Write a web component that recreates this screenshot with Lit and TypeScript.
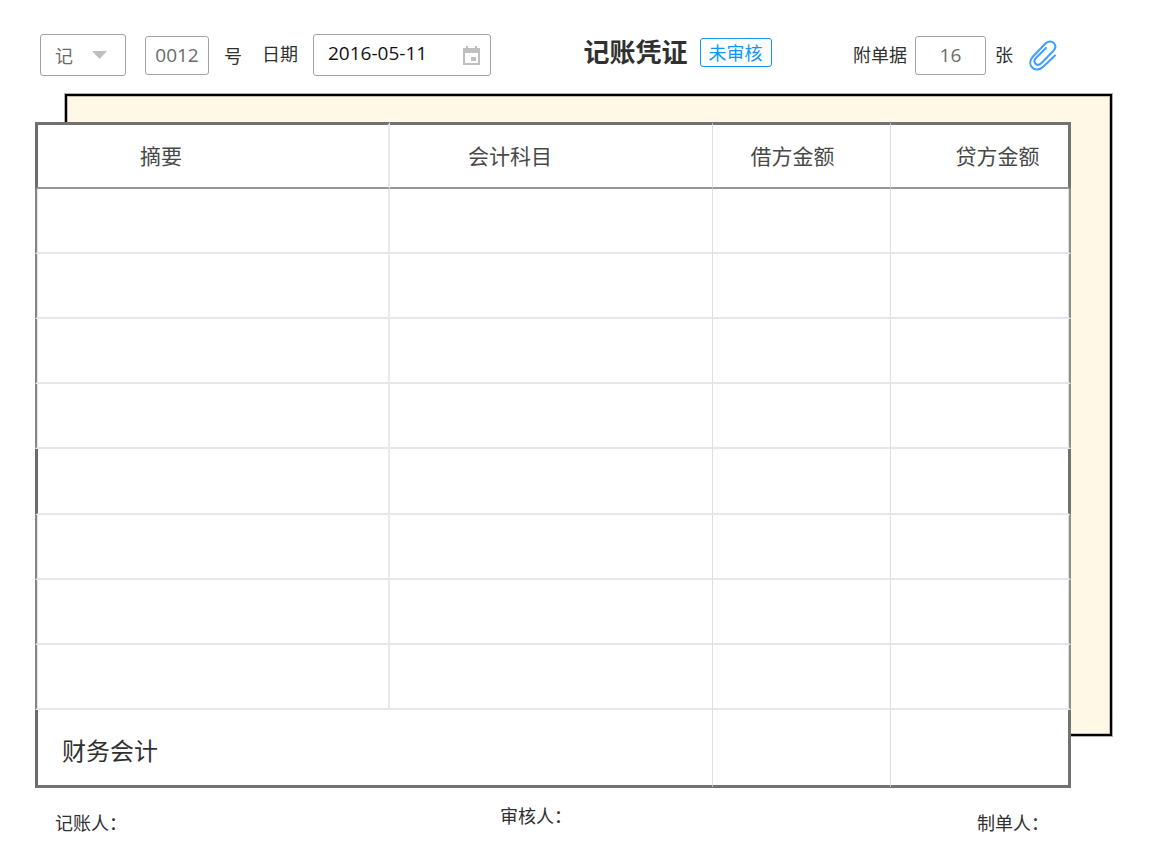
import { LitElement, html, css } from "lit";
import { customElement, state } from "lit/decorators.js";

const HEADINGS = ["摘要", "会计科目", "借方金额", "贷方金额"];
const ROW_COUNT = 8;
const ACTIVE_ROW = 4;

@customElement("app-root")
export class AppRoot extends LitElement {
  static styles = css`
    :host {
      display: block;
      background: #fff;
      color: #303030;
      font-family: "Open Sans", "Noto Sans CJK SC", sans-serif;
      font-size: 18px;
      line-height: 24px;
    }
    * {
      box-sizing: border-box;
    }
    .bar {
      display: flex;
      justify-content: space-between;
      align-items: center;
      padding: 34px 102px 0 40px;
      height: 76px;
    }
    .group {
      display: flex;
      align-items: center;
      white-space: nowrap;
    }
    .field {
      display: block;
      font: inherit;
      color: #6a6a6a;
      background: #fff;
      border: 1px solid #a3a3a3;
      border-radius: 3px;
      outline: none;
      margin: 0;
      padding: 0;
    }
    .combo {
      display: grid;
      align-items: center;
    }
    .combo > * {
      grid-area: 1 / 1;
    }
    .mark {
      justify-self: end;
      pointer-events: none;
    }
    .kind {
      appearance: none;
      width: 86px;
      height: 42px;
      padding: 2px 14px 0;
    }
    .arrow {
      margin-right: 19px;
    }
    .number,
    .date,
    .count {
      font-size: 19px;
    }
    .number {
      width: 64px;
      height: 39px;
      margin-left: 19px;
      text-align: center;
    }
    .after-number {
      margin: 2px 20px 0 15px;
    }
    .date-label {
      margin-right: 15px;
      padding-bottom: 2px;
    }
    .date {
      width: 178px;
      height: 42px;
      padding: 0 40px 4px 14px;
      color: #111;
    }
    .calendar {
      display: block;
      border: 0;
      padding: 0;
      margin-right: 11px;
      background: none;
    }
    svg {
      display: block;
    }
    .heading {
      margin-left: 11px;
      padding-bottom: 6px;
    }
    h1 {
      margin: 0;
      font-size: 26px;
      line-height: 30px;
      font-weight: 700;
    }
    .badge {
      margin-left: 12px;
      padding: 0 8px;
      height: 29px;
      line-height: 28px;
      font-size: 18px;
      color: #1296f5;
      border: 1px solid #1296f5;
      border-radius: 3px;
    }
    .count {
      width: 71px;
      height: 39px;
      margin: 0 9px 0 8px;
      text-align: center;
    }
    .clip {
      border: 0;
      padding: 0;
      margin-left: 16px;
      background: none;
    }
    .stack {
      display: grid;
      padding: 18px 47px 0 35px;
    }
    .stack > * {
      grid-area: 1 / 1;
    }
    .backing {
      margin: 0 0 52px 30px;
      background: #fff8e6;
      border: 2px solid #000;
      box-shadow: 0 0 0 1px #b0b0b0, inset 0 0 0 1px #c2bdb0;
    }
    .sheet {
      position: relative;
      margin: 28px 41px 0 0;
      background: #fff;
    }
    table {
      width: 100%;
      table-layout: fixed;
      border-collapse: separate;
      border-spacing: 0;
    }
    .c0 {
      width: 355px;
    }
    .c1 {
      width: 323px;
    }
    .c2 {
      width: 178px;
    }
    .c3 {
      width: 180px;
    }
    th,
    td {
      padding: 0;
      border: 0 solid #e6e6ec;
      border-right: 1px solid #dcdfe8;
    }
    th {
      height: 67px;
      font-size: 21px;
      font-weight: 400;
      line-height: 30px;
      color: #484848;
      border-top: 3px solid #727272;
      border-bottom: 2px solid #969696;
    }
    th:first-child,
    .line td:first-child {
      border-right: 2px solid #e9e9ef;
    }
    th:first-child {
      border-left: 3px solid #6c6c6c;
      padding-right: 104px;
    }
    th:nth-child(2) {
      padding-right: 82px;
    }
    th:nth-child(3) {
      padding-right: 18px;
    }
    th:last-child {
      border-right: 3px solid #727272;
      padding-left: 36px;
    }
    .line td {
      height: 65px;
      border-bottom: 2px solid #e6e6ec;
    }
    .line td:first-child {
      border-left: 2px solid #868686;
      box-shadow: inset 1px 0 #e2e4ec;
    }
    .line td:last-child {
      border-right: 2px solid #8e908e;
      box-shadow: inset -1px 0 #dcdee6;
    }
    .line.active td {
      height: 66px;
    }
    .line.active td:first-child {
      border-left: 3px solid #6c6c6c;
      box-shadow: none;
    }
    .line.active td:last-child {
      border-right: 3px solid #6f726f;
      box-shadow: none;
    }
    .total td {
      height: 78px;
      border-bottom: 3px solid #727272;
    }
    .total td:first-child {
      padding: 6px 0 0 24px;
      font-size: 24px;
      line-height: 34px;
      border-left: 3px solid #6c6c6c;
    }
    .total td:last-child {
      border-right: 3px solid #727272;
    }
    .signatures {
      display: grid;
      grid-template-columns: 445fr 477fr auto;
      padding: 16px 110px 0 55px;
    }
    .outer {
      padding-top: 7px;
    }
  `;

  @state() private kind = "记";
  @state() private voucherNo = "0012";
  @state() private date = "2016-05-11";
  @state() private attachments = "16";

  private renderLine(index: number) {
    return html`<tr class=${index === ACTIVE_ROW ? "line active" : "line"}>
      ${HEADINGS.map(() => html`<td></td>`)}
    </tr>`;
  }

  render() {
    return html`
      <header class="bar">
        <div class="group">
          <div class="combo">
            <select class="field kind" aria-label="凭证字" .value=${this.kind}>
              <option>记</option>
            </select>
            <svg class="mark arrow" width="15" height="8" viewBox="0 0 15 8" aria-hidden="true">
              <path d="M0 0h15L7.500 8z" fill="#bfbfbf" />
            </svg>
          </div>
          <input id="no" class="field number" .value=${this.voucherNo} />
          <label for="no" class="after-number">号</label>
          <label for="date" class="date-label">日期</label>
          <div class="combo">
            <input id="date" class="field date" .value=${this.date} />
            <button class="mark calendar" aria-label="选择日期">
              <svg width="17" height="19" viewBox="0 0 17 19">
                <path
                  fill="#bfbfbf"
                  fill-rule="evenodd"
                  d="M3 0h2v2h7V0h2v2h3v17H0V2h3zM2 7v10h13V7zM8 11h5v4H8z"
                />
              </svg>
            </button>
          </div>
        </div>
        <div class="group heading">
          <h1>记账凭证</h1>
          <span class="badge">未审核</span>
        </div>
        <div class="group">
          <label for="count">附单据</label>
          <input id="count" class="field count" .value=${this.attachments} />
          <span>张</span>
          <button class="clip" aria-label="附件">
            <svg width="28" height="31" viewBox="0 0 28 31" fill="none" stroke="#409eff" stroke-width="2" stroke-linecap="round">
              <path
                d="M26 15.500L14.500 26.500C11 30 6 30.500 3.200 27.500C0.300 24.500 0.800 20 4 16.500L16.500 3.500C19 1 22.500 0.700 24.800 3C27 5.300 26.700 8.500 24.300 11L12.500 23C10.500 25 8 25.200 6.500 23.700C5 22.200 5.300 19.800 7.200 17.800L17 8"
              />
            </svg>
          </button>
        </div>
      </header>

      <main class="stack">
        <div class="backing"></div>
        <div class="sheet">
          <table>
            <colgroup>
              ${HEADINGS.map((_, i) => html`<col class="c${i}" />`)}
            </colgroup>
            <thead>
              <tr>
                ${HEADINGS.map((text) => html`<th scope="col">${text}</th>`)}
              </tr>
            </thead>
            <tbody>
              ${Array.from({ length: ROW_COUNT }, (_, i) => this.renderLine(i))}
            </tbody>
            <tfoot>
              <tr class="total">
                <td colspan="2">财务会计</td>
                <td></td>
                <td></td>
              </tr>
            </tfoot>
          </table>
        </div>
      </main>

      <footer class="signatures">
        <span class="outer">记账人：</span>
        <span>审核人：</span>
        <span class="outer">制单人：</span>
      </footer>
    `;
  }
}
